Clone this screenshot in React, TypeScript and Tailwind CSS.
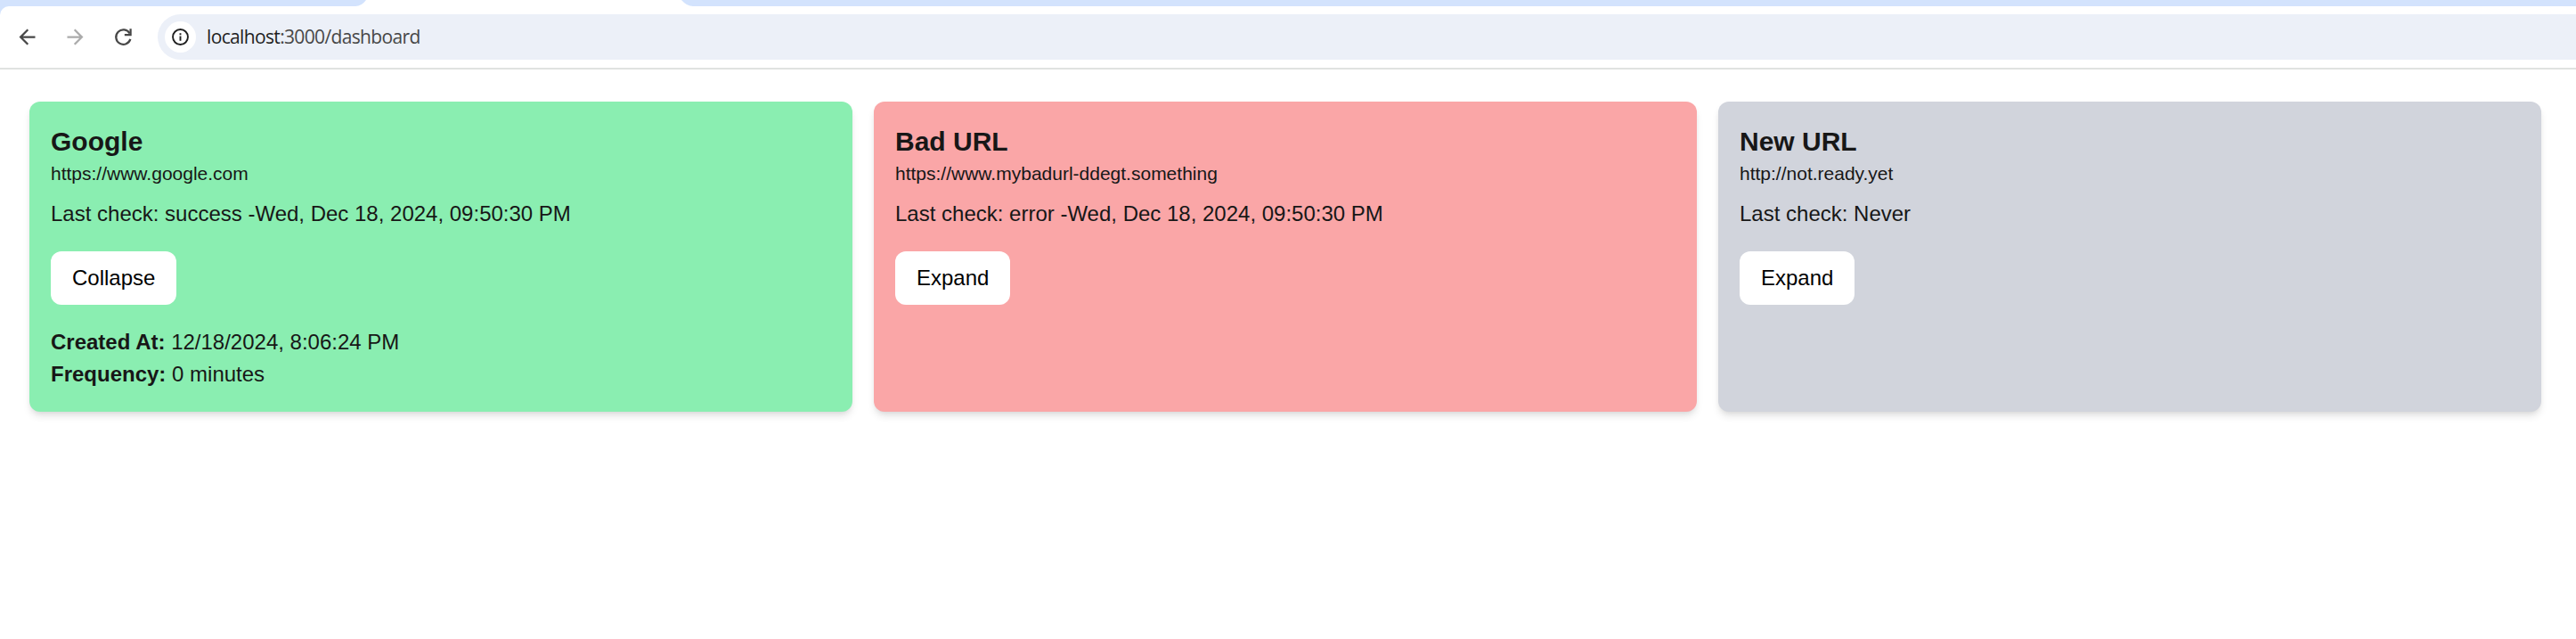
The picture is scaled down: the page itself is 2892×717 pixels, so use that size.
import React from "react";

type Monitor = {
  name: string;
  url: string;
  lastCheck: string;
  tone: string;
  details?: { createdAt: string; frequency: string };
};

const monitors: Monitor[] = [
  {
    name: "Google",
    url: "https://www.google.com",
    lastCheck: "Last check: success -Wed, Dec 18, 2024, 09:50:30 PM",
    tone: "bg-[#8aeeb1]",
    details: { createdAt: "12/18/2024, 8:06:24 PM", frequency: "0 minutes" },
  },
  {
    name: "Bad URL",
    url: "https://www.mybadurl-ddegt.something",
    lastCheck: "Last check: error -Wed, Dec 18, 2024, 09:50:30 PM",
    tone: "bg-[#faa6a7]",
  },
  {
    name: "New URL",
    url: "http://not.ready.yet",
    lastCheck: "Last check: Never",
    tone: "bg-[#d1d4dc]",
  },
];

function TabStrip() {
  return (
    <div className="flex h-[7px] justify-between overflow-hidden bg-white">
      <svg className="h-[7px] w-[412px]" viewBox="0 0 412 7" fill="#d3e3fd">
        <path d="M0 0H411Q406 7 399 7H0Z" />
      </svg>
      <svg className="h-[7px] w-[2127px]" viewBox="0 0 2127 7" fill="#d3e3fd">
        <path d="M0 0H2127V7H13Q6 7 0 0Z" />
      </svg>
    </div>
  );
}

function Toolbar() {
  return (
    <div className="bg-[#d3e3fd]">
      <div className="flex h-[71px] items-start rounded-tl-[10px] border-b-2 border-[#e0e2e1] bg-white pt-[9px]">
        <div className="flex h-[51px] items-center pl-[16.5px]">
          <svg className="size-[27px]" viewBox="0 0 24 24" fill="#474747">
            <path d="M20 11H7.83l5.59-5.59L12 4l-8 8 8 8 1.41-1.41L7.83 13H20v-2z" />
          </svg>
          <svg className="ml-[27px] size-[27px]" viewBox="0 0 24 24" fill="#ababab">
            <path d="M12 4l-1.41 1.41L16.17 11H4v2h12.17l-5.58 5.59L12 20l8-8z" />
          </svg>
          <svg className="ml-[27px] size-[27px]" viewBox="0 0 24 24" fill="none" stroke="#474747" strokeWidth="2">
            <path d="M19 14.1A7.3 7.3 0 1 1 18.3 8.4" />
            <path d="M19.2 3.8V9.8H13.2" />
          </svg>
        </div>
        <div className="ml-[25.5px] flex h-[51px] flex-1 items-center rounded-l-full bg-[#ecf0f8] pl-2">
          <div className="flex size-[35px] items-center justify-center rounded-full bg-white">
            <svg className="size-[19px]" viewBox="0 0 20 20" fill="none" stroke="#1f1f1f" strokeWidth="2">
              <circle cx="10" cy="10" r="8.9" />
              <path d="M10 9v5.5M10 5.5v2" />
            </svg>
          </div>
          <div className="ml-3 pb-px font-['Open_Sans','Noto_Sans',sans-serif] text-[21px] leading-7 tracking-[-0.65px] text-[#474747]">
            <span className="text-[#1f1f1f]">localhost</span>:3000/dashboard
          </div>
        </div>
      </div>
    </div>
  );
}

function MonitorCard({ name, url, lastCheck, tone, details }: Monitor) {
  return (
    <section
      className={`rounded-xl p-6 text-2xl leading-9 text-[#171717] shadow-[0_6px_9px_-1.5px_rgba(0,0,0,0.1),0_3px_6px_-3px_rgba(0,0,0,0.1)] ${tone}`}
    >
      <h2 className="text-[30px] leading-[42px] font-bold">{name}</h2>
      <p className="text-[21px] leading-[30px]">{url}</p>
      <p className="mt-3">{lastCheck}</p>
      <button className="mt-6 block rounded-xl bg-white px-6 py-3 text-black">
        {details ? "Collapse" : "Expand"}
      </button>
      {details && (
        <div className="mt-6">
          <p>
            <strong>Created At:</strong> {details.createdAt}
          </p>
          <p>
            <strong>Frequency:</strong> {details.frequency}
          </p>
        </div>
      )}
    </section>
  );
}

export default function App() {
  return (
    <div className="min-h-screen bg-white font-['Liberation_Sans',Arial,sans-serif]">
      <TabStrip />
      <Toolbar />
      <main className="grid grid-cols-3 gap-6 pt-9 pr-[39px] pl-[33px]">
        {monitors.map((monitor) => (
          <MonitorCard key={monitor.name} {...monitor} />
        ))}
      </main>
    </div>
  );
}
